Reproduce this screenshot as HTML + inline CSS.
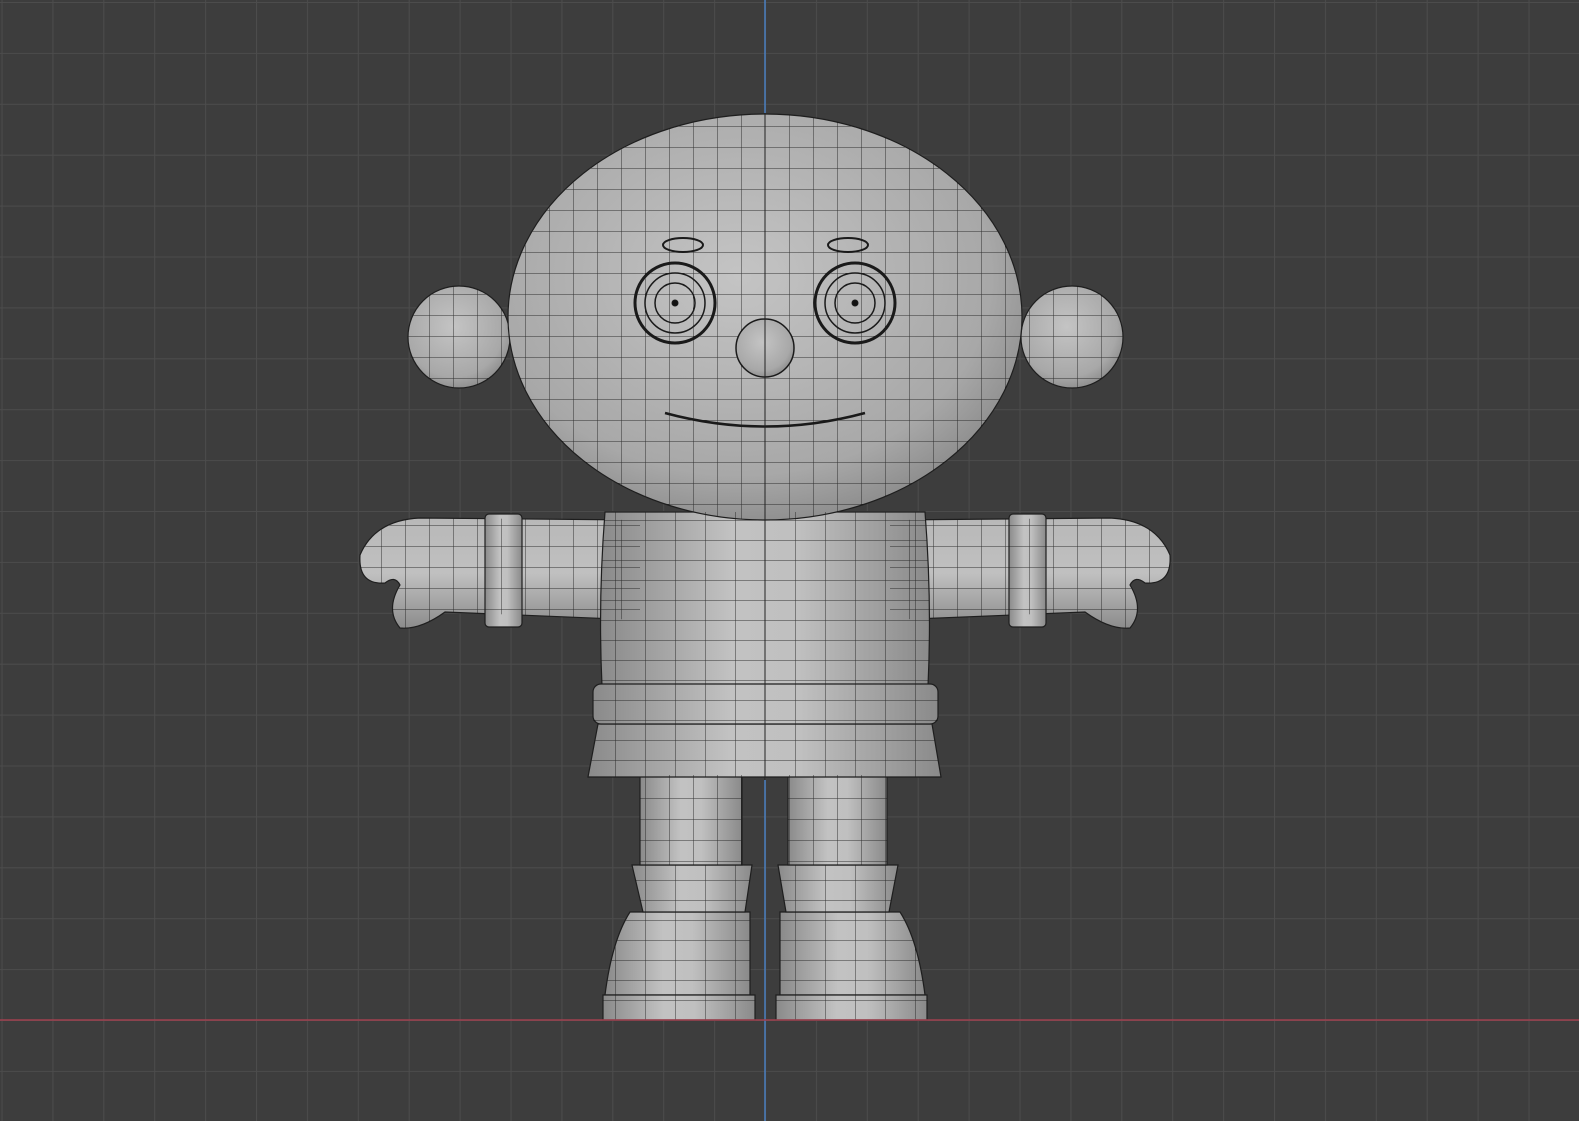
<!DOCTYPE html>
<html><head><meta charset="utf-8"><style>
html,body{margin:0;padding:0;background:#3d3d3d;overflow:hidden}
svg{display:block}
</style></head><body>
<svg width="1579" height="1121" viewBox="0 0 1579 1121" xmlns="http://www.w3.org/2000/svg">
<defs>
<pattern id="grid" x="1.5" y="2" width="50.9" height="50.9" patternUnits="userSpaceOnUse">
<path d="M0 0H50.9M0 0V50.9" stroke="#4c4c4c" stroke-width="2" fill="none"/>
</pattern>
<pattern id="wire" x="765" y="0" width="24" height="21" patternUnits="userSpaceOnUse">
<path d="M0 0H24M0 0V21" stroke="#1a1a1a" stroke-width="1" fill="none"/>
</pattern>
<pattern id="wire2" x="765" y="0" width="30" height="20" patternUnits="userSpaceOnUse">
<path d="M0 0H30M0 0V20" stroke="#1a1a1a" stroke-width="1" fill="none"/>
</pattern>
<radialGradient id="g" cx="0.45" cy="0.4" r="0.7">
<stop offset="0" stop-color="#c4c4c4"/><stop offset="0.7" stop-color="#a8a8a8"/><stop offset="1" stop-color="#7c7c7c"/>
</radialGradient>
<linearGradient id="gh" x1="0" x2="1" y1="0" y2="0">
<stop offset="0" stop-color="#8a8a8a"/><stop offset="0.4" stop-color="#c2c2c2"/><stop offset="0.6" stop-color="#c0c0c0"/><stop offset="1" stop-color="#8a8a8a"/>
</linearGradient>
<linearGradient id="gv" x1="0" x2="0" y1="0" y2="1">
<stop offset="0" stop-color="#b8b8b8"/><stop offset="0.5" stop-color="#c0c0c0"/><stop offset="1" stop-color="#8c8c8c"/>
</linearGradient>
</defs>
<rect width="1579" height="1121" fill="#3d3d3d"/>
<rect width="1579" height="1121" fill="url(#grid)"/>

<g stroke="#1e1e1e" stroke-width="1.2">
<path d="M630 912 H750 V995 H605 Q612 940 630 912Z" fill="url(#gh)"/>
<path d="M603 995 H755 V1020 H603Z" fill="url(#gh)"/>
<path d="M780 912 H900 Q918 940 925 995 H780Z" fill="url(#gh)"/>
<path d="M776 995 H927 V1020 H776Z" fill="url(#gh)"/>
<path d="M632 865 H752 L745 912 H643Z" fill="url(#gh)"/>
<path d="M778 865 H898 L889 912 H786Z" fill="url(#gh)"/>
<path d="M640 775 H742 V865 H640Z" fill="url(#gh)"/>
<path d="M788 775 H887 V865 H788Z" fill="url(#gh)"/>
<path d="M640 520 L420 518 Q375 520 360 555 Q358 585 385 583 Q395 575 400 585 Q385 610 400 628 Q420 630 445 612 L640 620Z" fill="url(#gv)"/>
<path d="M890 520 L1110 518 Q1155 520 1170 555 Q1172 585 1145 583 Q1135 575 1130 585 Q1145 610 1130 628 Q1110 630 1085 612 L890 620Z" fill="url(#gv)"/>
<rect x="485" y="514" width="37" height="113" rx="4" fill="url(#gh)"/>
<rect x="1009" y="514" width="37" height="113" rx="4" fill="url(#gh)"/>
<path d="M605 512 H925 Q932 600 928 686 H602 Q598 600 605 512Z" fill="url(#gh)"/>
<path d="M598 724 H932 L941 777 H588Z" fill="url(#gh)"/>
<rect x="593" y="684" width="345" height="40" rx="8" fill="url(#gh)"/>
<circle cx="459" cy="337" r="51" fill="url(#g)"/>
<circle cx="1072" cy="337" r="51" fill="url(#g)"/>
<ellipse cx="765" cy="317" rx="257" ry="203" fill="url(#g)"/>
</g>
<g opacity="0.85">
<ellipse cx="765" cy="317" rx="257" ry="203" fill="url(#wire)"/>
<circle cx="459" cy="337" r="51" fill="url(#wire)"/>
<circle cx="1072" cy="337" r="51" fill="url(#wire)"/>
<path d="M605 512 H925 Q932 600 928 686 H602 Q598 600 605 512Z" fill="url(#wire2)"/>
<path d="M640 520 L420 518 Q375 520 360 555 Q358 585 385 583 Q395 575 400 585 Q385 610 400 628 Q420 630 445 612 L640 620Z" fill="url(#wire)"/>
<path d="M890 520 L1110 518 Q1155 520 1170 555 Q1172 585 1145 583 Q1135 575 1130 585 Q1145 610 1130 628 Q1110 630 1085 612 L890 620Z" fill="url(#wire)"/>
<path d="M640 775 H742 V865 H640Z M788 775 H887 V865 H788Z" fill="url(#wire)"/>
<path d="M632 865 H752 L745 912 H643Z M778 865 H898 L889 912 H786Z" fill="url(#wire2)"/>
<path d="M630 912 H750 V995 H605 Q612 940 630 912Z M780 912 H900 Q918 940 925 995 H780Z" fill="url(#wire2)"/>
<path d="M598 724 H932 L941 777 H588Z" fill="url(#wire2)"/>
<rect x="593" y="684" width="345" height="40" fill="url(#wire2)"/>
<path d="M603 995 H755 V1020 H603Z M776 995 H927 V1020 H776Z" fill="url(#wire2)"/>
</g>
<g stroke="#1a1a1a" fill="none">
<circle cx="675" cy="303" r="40" stroke-width="3"/>
<circle cx="675" cy="303" r="30" stroke-width="1.5"/>
<circle cx="675" cy="303" r="20" stroke-width="1.5"/>
<circle cx="675" cy="303" r="3" fill="#111"/>
<circle cx="855" cy="303" r="40" stroke-width="3"/>
<circle cx="855" cy="303" r="30" stroke-width="1.5"/>
<circle cx="855" cy="303" r="20" stroke-width="1.5"/>
<circle cx="855" cy="303" r="3" fill="#111"/>
<ellipse cx="683" cy="245" rx="20" ry="7" stroke-width="2"/>
<ellipse cx="848" cy="245" rx="20" ry="7" stroke-width="2"/>
<path d="M665 413 Q765 440 865 413" stroke-width="2.5"/>
</g>
<circle cx="765" cy="348" r="29" fill="url(#g)" stroke="#1a1a1a" stroke-width="1.5"/>
<line x1="765" y1="0" x2="765" y2="113" stroke="#4a7fc0" stroke-width="1.5"/>
<line x1="765" y1="780" x2="765" y2="1121" stroke="#4a7fc0" stroke-width="1.5"/>
<line x1="0" y1="1020" x2="1579" y2="1020" stroke="#a0404f" stroke-width="1.5"/>
<line x1="765" y1="113" x2="765" y2="780" stroke="#222" stroke-width="1"/>
</svg>
</body></html>
